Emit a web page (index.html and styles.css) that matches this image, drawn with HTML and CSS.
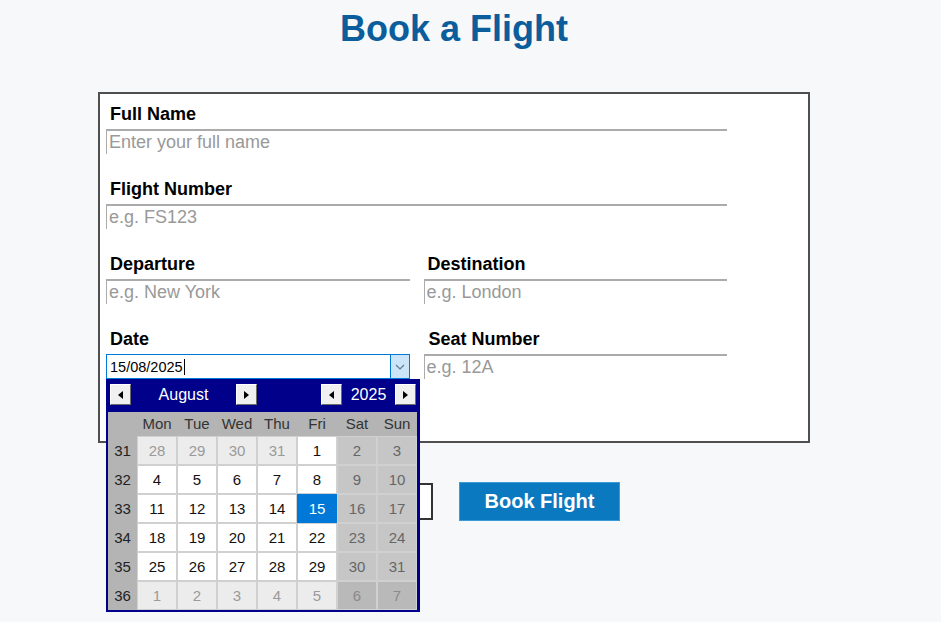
FILE: index.html
```html
<!DOCTYPE html>
<html lang="en">
<head>
<meta charset="utf-8">
<title>Book a Flight</title>
<link rel="stylesheet" href="styles.css">
</head>
<body>
<div class="page">
  <h1 class="title">Book a Flight</h1>
  <form class="booking">
    <div class="fields">
      <div class="field">
        <label class="label">Full Name</label>
        <input class="input" type="text" placeholder="Enter your full name">
      </div>
      <div class="field">
        <label class="label">Flight Number</label>
        <input class="input" type="text" placeholder="e.g. FS123">
      </div>
      <div class="pair">
        <div class="field">
          <label class="label">Departure</label>
          <input class="input" type="text" placeholder="e.g. New York">
        </div>
        <div class="field">
          <label class="label">Destination</label>
          <input class="input" type="text" placeholder="e.g. London">
        </div>
      </div>
      <div class="pair">
        <div class="field">
          <label class="label">Date</label>
          <div class="date-wrap">
            <div class="date-box">
              <span class="date-text">15/08/2025</span><span class="caret"></span>
              <span class="drop-btn">
                <svg width="10" height="6" viewBox="0 0 10 6"><polyline points="1,1 5,5 9,1" fill="none" stroke="#5c7c99" stroke-width="1.2"/></svg>
              </span>
            </div>
            <div class="calendar">
              <div class="cal-head">
                <div class="nav-group month">
                  <span class="nav-btn"><span class="tri left"></span></span>
                  <span class="nav-label">August</span>
                  <span class="nav-btn"><span class="tri right"></span></span>
                </div>
                <div class="nav-group year">
                  <span class="nav-btn"><span class="tri left"></span></span>
                  <span class="nav-label">2025</span>
                  <span class="nav-btn"><span class="tri right"></span></span>
                </div>
              </div>
              <div class="cal-grid">
                <span class="dh"></span><span class="dh">Mon</span><span class="dh">Tue</span><span class="dh">Wed</span><span class="dh">Thu</span><span class="dh">Fri</span><span class="dh">Sat</span><span class="dh">Sun</span>
                <span class="wk">31</span><span class="c o">28</span><span class="c o">29</span><span class="c o">30</span><span class="c o">31</span><span class="c d">1</span><span class="c we">2</span><span class="c we">3</span>
                <span class="wk">32</span><span class="c d">4</span><span class="c d">5</span><span class="c d">6</span><span class="c d">7</span><span class="c d">8</span><span class="c we">9</span><span class="c we">10</span>
                <span class="wk">33</span><span class="c d">11</span><span class="c d">12</span><span class="c d">13</span><span class="c d">14</span><span class="c sel">15</span><span class="c we">16</span><span class="c we">17</span>
                <span class="wk">34</span><span class="c d">18</span><span class="c d">19</span><span class="c d">20</span><span class="c d">21</span><span class="c d">22</span><span class="c we">23</span><span class="c we">24</span>
                <span class="wk">35</span><span class="c d">25</span><span class="c d">26</span><span class="c d">27</span><span class="c d">28</span><span class="c d">29</span><span class="c we">30</span><span class="c we">31</span>
                <span class="wk">36</span><span class="c o">1</span><span class="c o">2</span><span class="c o">3</span><span class="c o">4</span><span class="c o">5</span><span class="c ow">6</span><span class="c ow">7</span>
              </div>
            </div>
          </div>
        </div>
        <div class="field">
          <label class="label seat">Seat Number</label>
          <input class="input" type="text" placeholder="e.g. 12A">
        </div>
      </div>
    </div>
  </form>
  <div class="actions">
    <button class="btn-secondary" type="button" aria-label="Clear"></button>
    <button class="btn-primary" type="button">Book Flight</button>
  </div>
</div>
</body>
</html>
```

FILE: styles.css
```css
html, body {
  margin: 0;
  padding: 0;
}

body {
  background: #f7f8fa;
  font-family: "Liberation Sans", Arial, sans-serif;
  color: #000;
  min-height: 622px;
}

.page {
  width: 712px;
  margin-left: 98px;
  min-height: 622px;
}

.title {
  margin: 0;
  padding-top: 9px;
  font-size: 36px;
  line-height: 40px;
  font-weight: bold;
  text-align: center;
  color: #0b5d9c;
}

.booking {
  box-sizing: border-box;
  width: 712px;
  margin: 43px 0 0;
  background: #fff;
  border: 2px solid #4f4f4f;
  padding: 10px 0 62px 6px;
}

.fields {
  width: 621px;
  display: flex;
  flex-direction: column;
  gap: 25px;
}

.pair {
  display: grid;
  grid-template-columns: 1fr 1fr;
  column-gap: 14px;
}

.field {
  display: flex;
  flex-direction: column;
  gap: 5px;
}

.label {
  font-size: 18px;
  line-height: 20px;
  font-weight: bold;
  padding-left: 4px;
}

.label.seat {
  padding-left: 5px;
}

.input {
  box-sizing: border-box;
  width: 100%;
  height: 25px;
  margin: 0;
  border: 0;
  border-top: 2px solid #ababab;
  border-left: 1px solid #ababab;
  padding: 0 2px;
  background: #fff;
  font-family: "Liberation Sans", Arial, sans-serif;
  font-size: 18px;
  color: #000;
  outline: none;
}

.input::placeholder {
  color: #999;
}

.date-wrap {
  position: relative;
}

.date-box {
  box-sizing: border-box;
  height: 25px;
  border: 1px solid #0078d7;
  display: flex;
  align-items: center;
  background: #fff;
}

.date-text {
  padding-left: 3px;
  font-size: 14.5px;
  color: #000;
}

.caret {
  width: 1px;
  height: 16px;
  background: #000;
  margin-left: 1px;
}

.drop-btn {
  margin-left: auto;
  box-sizing: border-box;
  width: 20px;
  height: 25px;
  margin-right: -1px;
  border: 1px solid #0078d7;
  background: #cce4f7;
  display: flex;
  align-items: center;
  justify-content: center;
}

.calendar {
  position: absolute;
  top: 100%;
  left: 0;
  z-index: 5;
  box-sizing: border-box;
  width: 314px;
  background: #00008b;
  border: 2px solid #00008b;
  padding: 0 1px 0 0;
}

.cal-head {
  height: 31px;
  box-sizing: border-box;
  padding: 3px 1px 0 2px;
  display: flex;
  justify-content: space-between;
  align-items: flex-start;
}

.nav-group {
  display: flex;
  align-items: center;
}

.nav-group.month .nav-label {
  width: 105px;
}

.nav-group.year .nav-label {
  width: 53px;
}

.nav-label {
  color: #fff;
  font-size: 16px;
  line-height: 21px;
  text-align: center;
}

.nav-btn {
  box-sizing: border-box;
  width: 21px;
  height: 21px;
  background: #f0f0f0;
  border: 1px solid;
  border-color: #ffffff #6b6b6b #6b6b6b #ffffff;
  display: flex;
  align-items: center;
  justify-content: center;
}

.tri {
  width: 0;
  height: 0;
  border-top: 4px solid transparent;
  border-bottom: 4px solid transparent;
}

.tri.left {
  border-right: 5px solid #000;
}

.tri.right {
  border-left: 5px solid #000;
}

.cal-grid {
  display: grid;
  grid-template-columns: 29px repeat(7, 40px);
  grid-template-rows: 24px repeat(6, 29px);
  background: #b4b4b4;
  font-size: 15px;
}

.dh {
  text-align: center;
  line-height: 24px;
  color: #333;
}

.wk {
  text-align: center;
  line-height: 29px;
  color: #222;
}

.c {
  box-sizing: border-box;
  border: 1px solid #d0d0d0;
  text-align: center;
  line-height: 27px;
}

.c.d {
  background: #fff;
  color: #111;
}

.c.o {
  background: #ececec;
  color: #9a9a9a;
}

.c.we {
  background: #c6c6c6;
  color: #666;
}

.c.ow {
  background: #b9b9b9;
  color: #8a8a8a;
}

.c.sel {
  background: #0078d7;
  border-color: #0078d7;
  color: #fff;
}

.actions {
  margin-top: 39px;
  display: flex;
  justify-content: center;
  align-items: center;
  gap: 26px;
}

.btn-secondary {
  box-sizing: border-box;
  width: 145px;
  height: 37px;
  background: #fff;
  border: 2px solid #333;
  font-family: "Liberation Sans", Arial, sans-serif;
  font-size: 18px;
}

.btn-primary {
  box-sizing: border-box;
  width: 161px;
  height: 39px;
  background: #0b79bf;
  border: 1px solid #3c9ad6;
  color: #fff;
  font-family: "Liberation Sans", Arial, sans-serif;
  font-size: 20px;
  font-weight: bold;
}
```
